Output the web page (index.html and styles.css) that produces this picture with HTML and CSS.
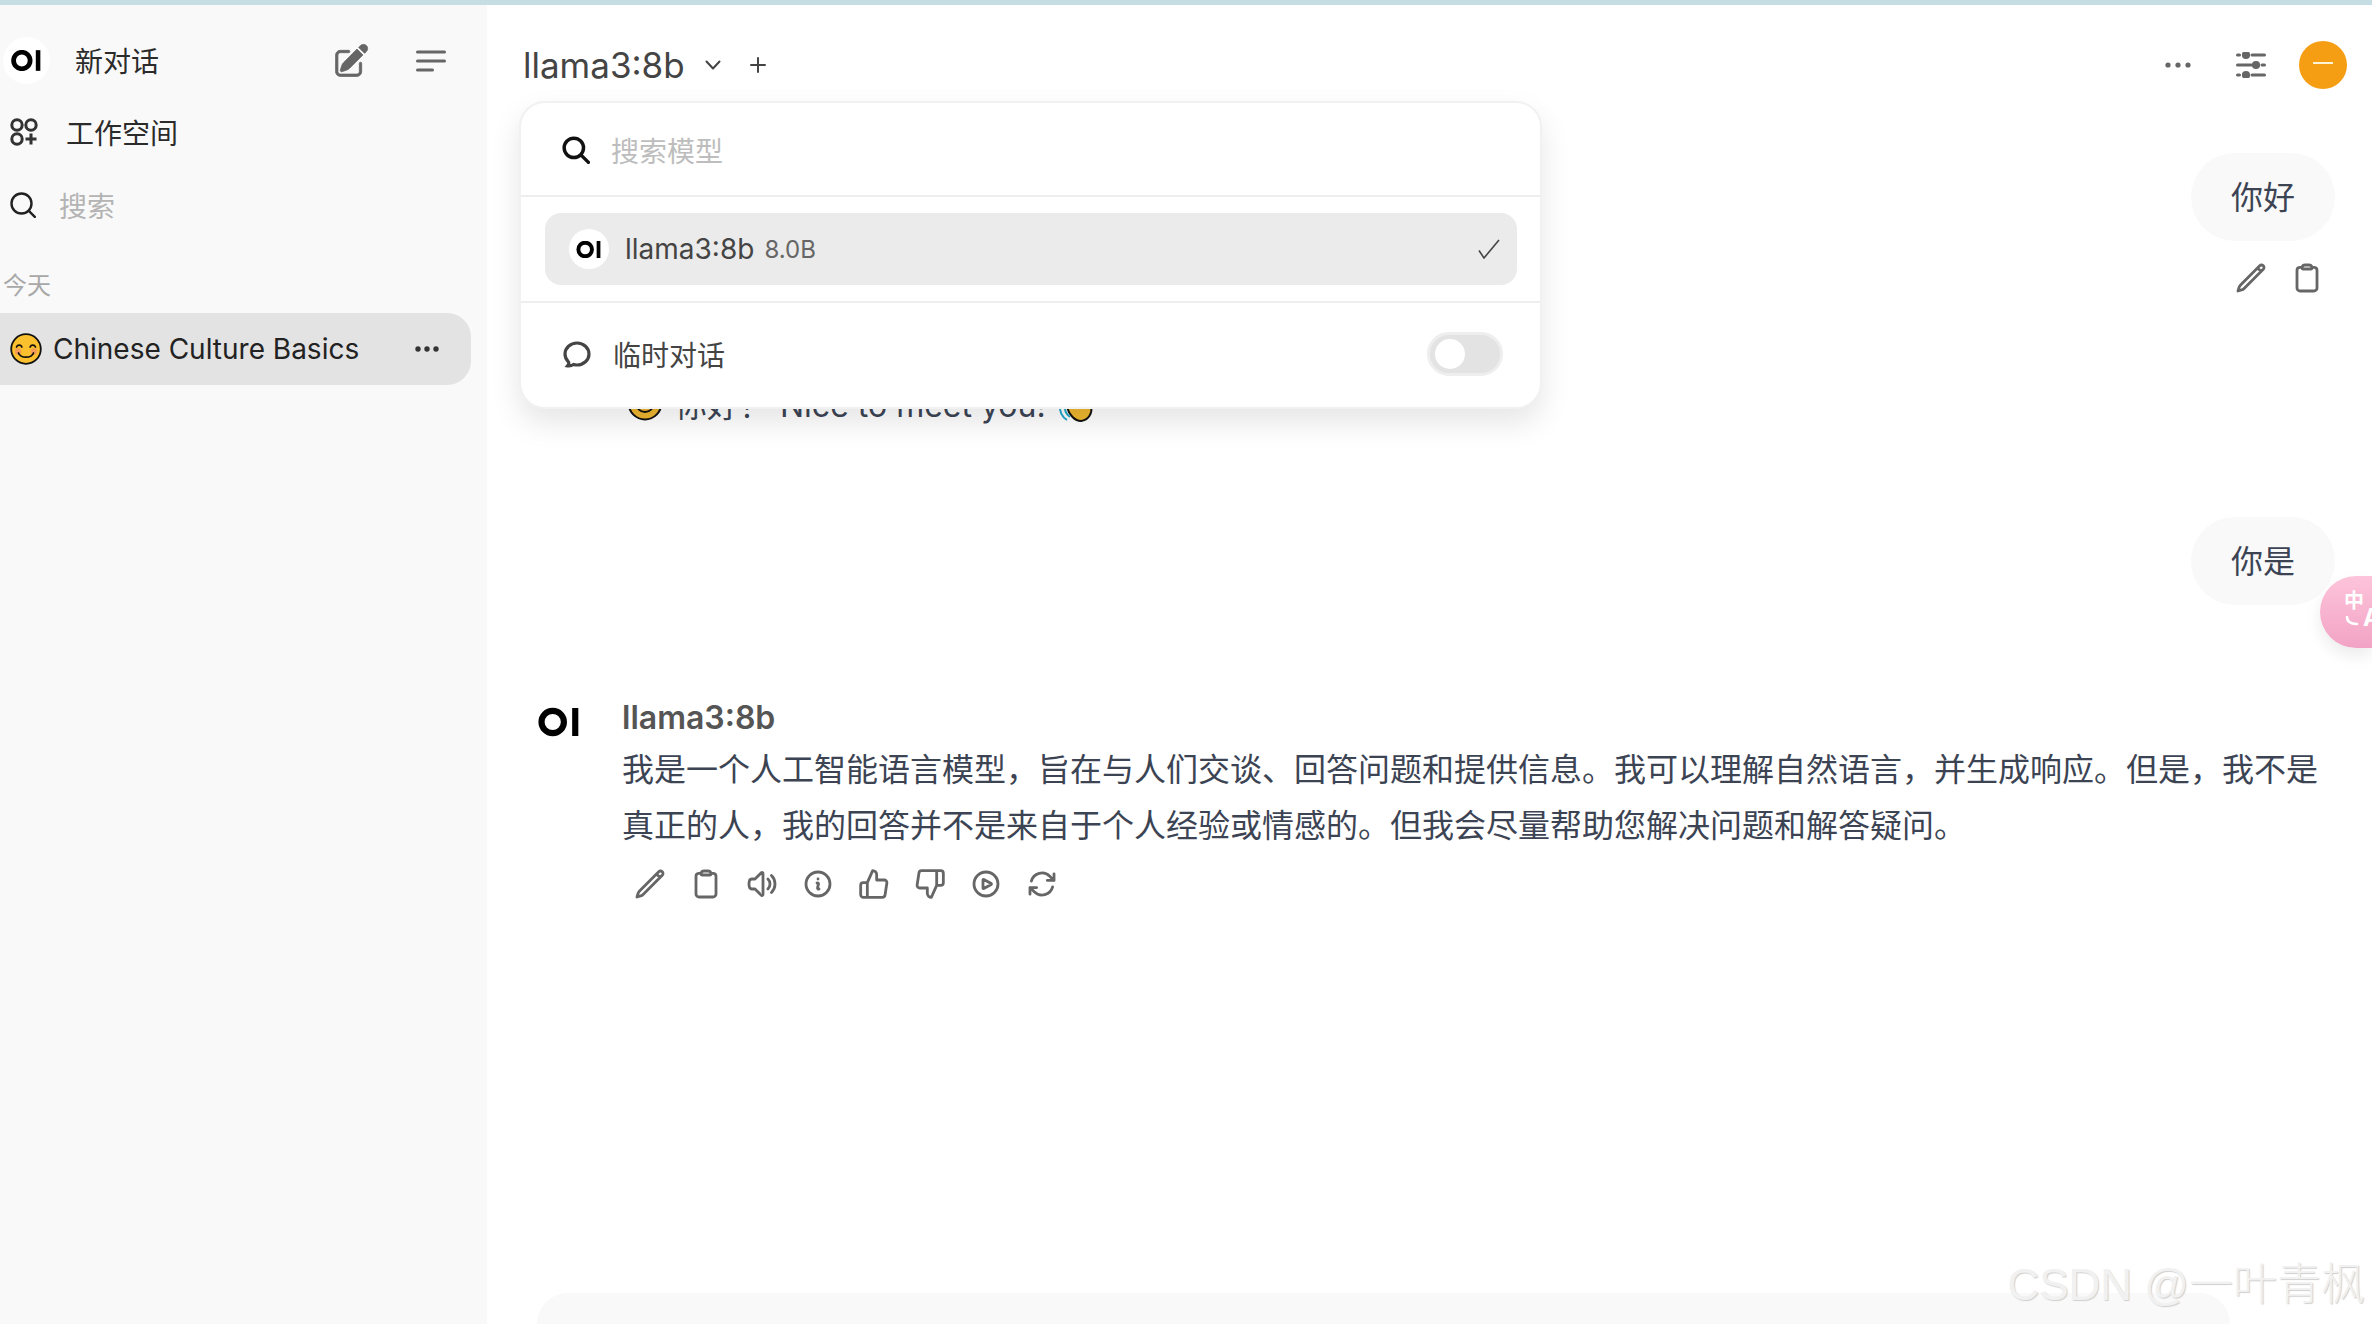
FILE: index.html
```html
<!DOCTYPE html>
<html lang="zh-CN">
<head>
    <meta charset="UTF-8">
    <meta name="viewport" content="width=device-width, initial-scale=1.0">
    <title>Chinese Culture Basics</title>
    <link rel="stylesheet" href="styles.css">
</head>
<body>
    <div class="top-strip"></div>
    <div class="app">
        <aside class="sidebar">
            <div class="new-chat">
                <span class="logo-badge">
                    <svg class="oi-logo" viewBox="0 0 30 20"><circle cx="10.5" cy="10" r="8" fill="none" stroke="#000" stroke-width="4.6"/><rect x="24" y="0" width="4.4" height="20" fill="#000"/></svg>
                </span>
                <span class="new-chat-label">新对话</span>
                <svg class="icon-compose" viewBox="0 0 24 24" fill="#666" stroke="#666" stroke-width=".5"><path d="M21.731 2.269a2.625 2.625 0 0 0-3.712 0l-1.157 1.157 3.712 3.712 1.157-1.157a2.625 2.625 0 0 0 0-3.712ZM19.513 8.199l-3.712-3.712-8.4 8.4a5.25 5.25 0 0 0-1.32 2.214l-.8 2.685a.75.75 0 0 0 .933.933l2.685-.8a5.25 5.25 0 0 0 2.214-1.32l8.4-8.4Z"/><path d="M5.25 5.25a3 3 0 0 0-3 3v10.5a3 3 0 0 0 3 3h10.5a3 3 0 0 0 3-3V13.5a.75.75 0 0 0-1.5 0v5.25a1.5 1.5 0 0 1-1.5 1.5H5.25a1.5 1.5 0 0 1-1.5-1.5V8.25a1.5 1.5 0 0 1 1.5-1.5h5.25a.75.75 0 0 0 0-1.5H5.25Z"/></svg>
                <svg class="icon-menu" viewBox="0 0 30 24" fill="none" stroke="#666" stroke-width="3" stroke-linecap="round"><path d="M1.5 3h27M1.5 12h27M1.5 21h15"/></svg>
            </div>

            <div class="side-link">
                <svg class="icon-workspace" viewBox="0 0 28 28" fill="none" stroke="#333" stroke-width="3"><circle cx="7" cy="7" r="5.2"/><circle cx="21" cy="7" r="5.2"/><circle cx="7" cy="21" r="5.2"/><path d="M21 15.5v11M15.5 21h11"/></svg>
                <span>工作空间</span>
            </div>

            <div class="side-search">
                <svg class="icon-side-search" viewBox="0 0 26 26" fill="none" stroke="#222" stroke-width="2.4" stroke-linecap="round"><circle cx="11.5" cy="11.5" r="10"/><path d="M18.8 18.8l6 6"/></svg>
                <span>搜索</span>
            </div>

            <div class="side-date">今天</div>

            <div class="chat-item">
                <svg class="emoji-smile" viewBox="0 0 32 32"><circle cx="16" cy="16" r="14.8" fill="#fbc02d" stroke="#111" stroke-width="1.8"/><circle cx="8" cy="18.5" r="3.2" fill="#f48a6a" opacity=".7"/><circle cx="24" cy="18.5" r="3.2" fill="#f48a6a" opacity=".7"/><path d="M6.5 14c1-2.6 4.4-2.6 5.4 0M20.1 14c1-2.6 4.4-2.6 5.4 0M8.5 20c2 5.6 13 5.6 15 0" fill="none" stroke="#111" stroke-width="1.7" stroke-linecap="round"/></svg>
                <span class="chat-title">Chinese Culture Basics</span>
                <svg class="icon-chat-more" viewBox="0 0 24 6" fill="#333"><circle cx="3" cy="3" r="2.7"/><circle cx="12" cy="3" r="2.7"/><circle cx="21" cy="3" r="2.7"/></svg>
            </div>
        </aside>

        <main class="main">
            <header class="chat-header">
                <span class="model-name">llama3:8b</span>
                <svg class="icon-chevron" viewBox="0 0 16 10" fill="none" stroke="#444" stroke-width="2" stroke-linecap="round" stroke-linejoin="round"><path d="M1.5 1.5L8 8.5l6.5-7"/></svg>
                <svg class="icon-plus" viewBox="0 0 16 16" fill="none" stroke="#444" stroke-width="2" stroke-linecap="round"><path d="M8 1v14M1 8h14"/></svg>
                <div class="header-right">
                    <svg class="icon-more" viewBox="0 0 26 6" fill="#666"><circle cx="3" cy="3" r="2.6"/><circle cx="13" cy="3" r="2.6"/><circle cx="23" cy="3" r="2.6"/></svg>
                    <svg class="icon-sliders" viewBox="0 0 30 26" fill="#666" stroke="#666" stroke-width="3" stroke-linecap="round"><path d="M1.5 3h2M16 3h12.5M1.5 13h14M26 13h2.5M1.5 23h2M16 23h12.5" fill="none"/><circle cx="10" cy="3" r="2.6"/><circle cx="20" cy="13" r="2.6"/><circle cx="10" cy="23" r="2.6"/></svg>
                    <span class="avatar"><span class="avatar-dash"></span></span>
                </div>
            </header>

            <div class="messages">
                <div class="user-msg">
                    <div class="bubble">你好</div>
                    <div class="user-actions">
                        <svg class="action-icon" viewBox="0 0 24 24"><path d="m16.862 4.487 1.687-1.688a1.875 1.875 0 1 1 2.652 2.652L6.832 19.82a4.5 4.5 0 0 1-1.897 1.13l-2.685.8.8-2.685a4.5 4.5 0 0 1 1.13-1.897L16.863 4.487Zm0 0L19.5 7.125"/></svg>
                        <svg class="action-icon" viewBox="0 0 24 24"><path d="M15.666 3.888A2.25 2.25 0 0 0 13.5 2.25h-3c-1.03 0-1.9.693-2.166 1.638m7.332 0c.055.194.084.4.084.612v0a.75.75 0 0 1-.75.75H9a.75.75 0 0 1-.75-.75v0c0-.212.03-.418.084-.612m7.332 0c.646.049 1.288.11 1.927.184 1.1.128 1.907 1.077 1.907 2.185V19.5a2.25 2.25 0 0 1-2.25 2.25H6.75A2.25 2.25 0 0 1 4.5 19.5V6.257c0-1.108.806-2.057 1.907-2.185a48.208 48.208 0 0 1 1.927-.184"/></svg>
                    </div>
                </div>

                <div class="hidden-reply">
                    <svg class="emoji-reply" viewBox="0 0 36 36"><circle cx="18" cy="18" r="16.4" fill="#eeb730" stroke="#111" stroke-width="2"/><circle cx="18" cy="18" r="9" fill="none" stroke="#111" stroke-width="1.8"/></svg>
                    <span>你好！ Nice to meet you!</span>
                    <svg class="emoji-wave" viewBox="0 0 36 36"><path d="M9 6c8-3 21 1 24 12 2 9-3 15-10 16-6 0-12-6-14-14Z" fill="#eeb730" stroke="#111" stroke-width="2"/><path d="M7 18c-1 5 1 9 5 12M2 18c-1 6 2 12 7 15" fill="none" stroke="#1fa5c8" stroke-width="2"/></svg>
                </div>

                <div class="user-msg user-msg-second">
                    <div class="bubble">你是</div>
                </div>

                <div class="assistant-msg">
                    <svg class="assistant-logo" viewBox="0 0 30 20"><circle cx="10.5" cy="10" r="8" fill="none" stroke="#000" stroke-width="4.4"/><rect x="24.4" y="0" width="4.4" height="20" fill="#000"/></svg>
                    <div class="assistant-body">
                        <div class="assistant-name">llama3:8b</div>
                        <p class="assistant-text">我是一个人工智能语言模型，旨在与人们交谈、回答问题和提供信息。我可以理解自然语言，并生成响应。但是，我不是真正的人，我的回答并不是来自于个人经验或情感的。但我会尽量帮助您解决问题和解答疑问。</p>
                        <div class="assistant-actions">
                            <svg class="action-icon" viewBox="0 0 24 24"><path d="m16.862 4.487 1.687-1.688a1.875 1.875 0 1 1 2.652 2.652L6.832 19.82a4.5 4.5 0 0 1-1.897 1.13l-2.685.8.8-2.685a4.5 4.5 0 0 1 1.13-1.897L16.863 4.487Zm0 0L19.5 7.125"/></svg>
                            <svg class="action-icon" viewBox="0 0 24 24"><path d="M15.666 3.888A2.25 2.25 0 0 0 13.5 2.25h-3c-1.03 0-1.9.693-2.166 1.638m7.332 0c.055.194.084.4.084.612v0a.75.75 0 0 1-.75.75H9a.75.75 0 0 1-.75-.75v0c0-.212.03-.418.084-.612m7.332 0c.646.049 1.288.11 1.927.184 1.1.128 1.907 1.077 1.907 2.185V19.5a2.25 2.25 0 0 1-2.25 2.25H6.75A2.25 2.25 0 0 1 4.5 19.5V6.257c0-1.108.806-2.057 1.907-2.185a48.208 48.208 0 0 1 1.927-.184"/></svg>
                            <svg class="action-icon" viewBox="0 0 24 24"><path d="M19.114 5.636a9 9 0 0 1 0 12.728M16.463 8.288a5.25 5.25 0 0 1 0 7.424M6.75 8.25l4.72-4.72a.75.75 0 0 1 1.28.53v15.88a.75.75 0 0 1-1.28.53l-4.72-4.72H4.51c-.88 0-1.704-.507-1.938-1.354A9.009 9.009 0 0 1 2.25 12c0-.83.112-1.633.322-2.396C2.806 8.756 3.63 8.25 4.51 8.25H6.75Z"/></svg>
                            <svg class="action-icon" viewBox="0 0 24 24"><path d="m11.25 11.25.041-.02a.75.75 0 0 1 1.063.852l-.708 2.836a.75.75 0 0 0 1.063.853l.041-.021M21 12a9 9 0 1 1-18 0 9 9 0 0 1 18 0Zm-9-3.75h.008v.008H12V8.25Z"/></svg>
                            <svg class="action-icon" viewBox="0 0 24 24"><path d="M14 9V5a3 3 0 0 0-3-3l-4 9v11h11.28a2 2 0 0 0 2-1.7l1.38-9a2 2 0 0 0-2-2.3zM7 22H4a2 2 0 0 1-2-2v-7a2 2 0 0 1 2-2h3"/></svg>
                            <svg class="action-icon" viewBox="0 0 24 24"><path d="M10 15v4a3 3 0 0 0 3 3l4-9V2H5.72a2 2 0 0 0-2 1.7l-1.38 9a2 2 0 0 0 2 2.3zm7-13h3a2 2 0 0 1 2 2v7a2 2 0 0 1-2 2h-3"/></svg>
                            <svg class="action-icon" viewBox="0 0 24 24"><path d="M21 12a9 9 0 1 1-18 0 9 9 0 0 1 18 0Z"/><path d="M15.91 11.672a.375.375 0 0 1 0 .656l-5.603 3.113a.375.375 0 0 1-.557-.328V8.887c0-.286.307-.466.557-.327l5.603 3.112Z"/></svg>
                            <svg class="action-icon" viewBox="0 0 24 24"><path d="M16.023 9.348h4.992v-.001M2.985 19.644v-4.992m0 0h4.992m-4.993 0 3.181 3.183a8.25 8.25 0 0 0 13.803-3.7M4.031 9.865a8.25 8.25 0 0 1 13.803-3.7l3.181 3.182m0-4.991v4.99"/></svg>
                        </div>
                    </div>
                </div>
            </div>

            <div class="input-box"></div>

            <!-- model selector dropdown -->
            <div class="model-menu">
                <div class="menu-search">
                    <svg class="icon-menu-search" viewBox="0 0 26 26" fill="none" stroke="#111" stroke-width="3.2" stroke-linecap="round"><circle cx="11" cy="11" r="9"/><path d="M18 18l6.5 6.5"/></svg>
                    <span>搜索模型</span>
                </div>
                <div class="menu-list">
                    <div class="menu-item">
                        <span class="logo-badge logo-badge-small">
                            <svg class="oi-logo-small" viewBox="0 0 30 20"><circle cx="10.5" cy="10" r="8" fill="none" stroke="#000" stroke-width="4.6"/><rect x="24" y="0" width="4.4" height="20" fill="#000"/></svg>
                        </span>
                        <span class="menu-item-name">llama3:8b</span>
                        <span class="menu-item-size">8.0B</span>
                        <svg class="icon-check" viewBox="0 0 22 20" fill="none" stroke="#444" stroke-width="1.6"><path d="M1 11.5l5 7.5L21 1"/></svg>
                    </div>
                </div>
                <div class="menu-temp">
                    <svg class="icon-bubble" viewBox="0 0 24 24" fill="none" stroke="#444" stroke-width="2.4"><path d="M12 20.25c4.97 0 9-3.694 9-8.25s-4.03-8.25-9-8.25S3 7.444 3 12c0 2.104.859 4.023 2.273 5.48.432.447.74 1.04.586 1.641a4.483 4.483 0 0 1-.923 1.785A5.969 5.969 0 0 0 6 21c1.282 0 2.47-.402 3.445-1.087.81.22 1.668.337 2.555.337Z"/></svg>
                    <span>临时对话</span>
                    <span class="toggle"><span class="toggle-knob"></span></span>
                </div>
            </div>

            <!-- translate extension button -->
            <div class="translate-btn">
                <span class="translate-zh">中</span>
                <span class="translate-en">A</span>
                <svg class="translate-arc" viewBox="0 0 14 10" fill="none" stroke="#fff" stroke-width="2.6" stroke-linecap="round"><path d="M2 1c0 5 3 7 10 7"/></svg>
            </div>
        </main>
    </div>
    <div class="watermark">CSDN @一叶青枫</div>
</body>
</html>
```

FILE: styles.css
```css
:root {
    --strip-color: #c6dee3;
    --sidebar-bg: #f9f9f9;
    --active-bg: #e3e3e3;
    --text-dark: #2b2b2b;
    --text-body: #3c4454;
    --text-muted: #b4b4b4;
    --line-color: #eeeeee;
    --font-stack: Inter, "Noto Sans CJK SC", "Noto Sans", sans-serif;
}

* {
    margin: 0;
    padding: 0;
    box-sizing: border-box;
    font-family: var(--font-stack);
}

html, body {
    height: 100%;
}

body {
    display: flex;
    flex-direction: column;
    overflow: hidden;
    background-color: #ffffff;
    position: relative;
}

svg {
    display: block;
    flex-shrink: 0;
}

.top-strip {
    height: 5px;
    background-color: var(--strip-color);
    flex-shrink: 0;
}

.app {
    flex: 1;
    display: flex;
    min-height: 0;
}

/* Sidebar */
.sidebar {
    width: 487px;
    flex-shrink: 0;
    background-color: var(--sidebar-bg);
    display: flex;
    flex-direction: column;
    padding-top: 32px;
    color: var(--text-dark);
}

.new-chat {
    display: flex;
    align-items: center;
    height: 47px;
    padding-left: 3px;
    font-size: 28px;
}

.logo-badge {
    width: 47px;
    height: 47px;
    border-radius: 50%;
    background-color: #ffffff;
    display: flex;
    align-items: center;
    justify-content: center;
    flex-shrink: 0;
}

.oi-logo {
    width: 31px;
    height: 21px;
}

.new-chat-label {
    margin-left: 25px;
    margin-top: -2px;
    width: 257px;
}

.icon-compose {
    width: 38px;
    height: 38px;
}

.icon-menu {
    width: 30px;
    height: 24px;
    margin-left: 46px;
}

.side-link {
    display: flex;
    align-items: center;
    height: 48px;
    margin-top: 24px;
    padding-left: 10px;
    font-size: 28px;
}

.icon-workspace {
    width: 28px;
    height: 28px;
    margin-right: 28px;
}

.side-search {
    display: flex;
    align-items: center;
    height: 48px;
    margin-top: 25px;
    padding-left: 10px;
    font-size: 28px;
    color: var(--text-muted);
}

.icon-side-search {
    width: 26px;
    height: 26px;
    margin-right: 23px;
}

.side-date {
    margin-top: 40px;
    padding-left: 3px;
    height: 34px;
    line-height: 34px;
    font-size: 24px;
    color: #a8a8a8;
}

.chat-item {
    display: flex;
    align-items: center;
    height: 72px;
    margin-top: 10px;
    margin-right: 16px;
    padding-left: 10px;
    background-color: var(--active-bg);
    border-radius: 0 24px 24px 0;
    font-size: 28px;
    color: #222222;
}

.emoji-smile {
    width: 32px;
    height: 32px;
    margin-right: 11px;
}

.chat-title {
    width: 362px;
    white-space: nowrap;
}

.icon-chat-more {
    width: 24px;
    height: 6px;
}

/* Main area */
.main {
    flex: 1;
    min-width: 0;
    position: relative;
    display: flex;
    flex-direction: column;
    overflow: hidden;
}

.chat-header {
    display: flex;
    align-items: center;
    height: 120px;
    padding: 0 25px 0 36px;
    color: #444444;
    flex-shrink: 0;
}

.model-name {
    font-size: 35px;
    line-height: 120px;
}

.icon-chevron {
    width: 16px;
    height: 10px;
    margin-left: 20px;
}

.icon-plus {
    width: 16px;
    height: 16px;
    margin-left: 29px;
}

.header-right {
    margin-left: auto;
    display: flex;
    align-items: center;
}

.icon-more {
    width: 26px;
    height: 6px;
}

.icon-sliders {
    width: 30px;
    height: 26px;
    margin-left: 45px;
}

.avatar {
    width: 48px;
    height: 48px;
    margin-left: 33px;
    border-radius: 50%;
    background-color: #f59e14;
    display: flex;
    align-items: center;
    justify-content: center;
}

.avatar-dash {
    width: 20px;
    height: 2px;
    margin-top: -4px;
    background-color: #fff3d6;
}

.messages {
    flex: 1;
    min-height: 0;
    padding: 28px 37px 0 51px;
    display: flex;
    flex-direction: column;
}

.user-msg {
    display: flex;
    flex-direction: column;
    align-items: flex-end;
}

.user-msg-second {
    margin-top: 87px;
}

.bubble {
    width: 144px;
    height: 88px;
    border-radius: 44px;
    background-color: #f9f9f9;
    font-size: 32px;
    line-height: 90px;
    text-align: center;
    color: var(--text-body);
}

.user-actions {
    display: flex;
    gap: 24px;
    margin-top: 21px;
    margin-right: 12px;
}

.action-icon {
    width: 32px;
    height: 32px;
    fill: none;
    stroke: #666666;
    stroke-width: 2.1;
    stroke-linecap: round;
    stroke-linejoin: round;
}

.hidden-reply {
    display: flex;
    align-items: center;
    height: 55px;
    margin-top: 81px;
    padding-left: 89px;
    font-size: 32px;
    color: var(--text-body);
}

.emoji-reply {
    width: 36px;
    height: 36px;
    margin-right: 12px;
}

.emoji-wave {
    width: 36px;
    height: 36px;
    margin-left: 12px;
    margin-top: 4px;
}

.assistant-msg {
    display: flex;
    margin-top: 90px;
}

.assistant-logo {
    width: 42px;
    height: 30px;
    margin-top: 12px;
}

.assistant-body {
    margin-left: 42px;
    flex: 1;
    min-width: 0;
}

.assistant-name {
    height: 47px;
    line-height: 46px;
    font-size: 32px;
    font-weight: 600;
    color: #555555;
}

.assistant-text {
    font-size: 32px;
    line-height: 55.5px;
    color: var(--text-body);
}

.assistant-actions {
    display: flex;
    gap: 24px;
    margin-top: 15px;
    padding-left: 12px;
}

.input-box {
    height: 31px;
    flex-shrink: 0;
    margin: 0 142px 0 50px;
    background-color: #f9f9f9;
    border-radius: 44px 44px 0 0;
}

/* Model dropdown */
.model-menu {
    position: absolute;
    top: 96px;
    left: 32px;
    width: 1023px;
    height: 308px;
    background-color: #ffffff;
    border: 2px solid #f1f1f1;
    border-radius: 26px;
    box-shadow: 0 14px 30px rgba(0, 0, 0, 0.1);
    display: flex;
    flex-direction: column;
}

.menu-search {
    display: flex;
    align-items: center;
    height: 94px;
    padding: 2px 0 0 41px;
    font-size: 28px;
    color: #bdbdbd;
    border-bottom: 2px solid var(--line-color);
    flex-shrink: 0;
}

.icon-menu-search {
    width: 28px;
    height: 28px;
    margin-right: 21px;
}

.menu-list {
    height: 106px;
    padding: 16px 23px 0 24px;
    border-bottom: 2px solid var(--line-color);
    flex-shrink: 0;
}

.menu-item {
    display: flex;
    align-items: center;
    height: 72px;
    padding: 0 17px 0 24px;
    border-radius: 16px;
    background-color: #ebebeb;
    color: #444444;
}

.logo-badge-small {
    width: 40px;
    height: 40px;
}

.oi-logo-small {
    width: 26px;
    height: 17px;
}

.menu-item-name {
    margin-left: 16px;
    font-size: 28px;
}

.menu-item-size {
    margin-left: 10px;
    font-size: 24px;
    color: #666666;
}

.icon-check {
    width: 22px;
    height: 20px;
    margin-left: auto;
}

.menu-temp {
    flex: 1;
    display: flex;
    align-items: center;
    padding: 0 37px 2px 40px;
    font-size: 28px;
    color: #444444;
}

.icon-bubble {
    width: 32px;
    height: 32px;
    margin-right: 20px;
}

.toggle {
    margin-left: auto;
    width: 76px;
    height: 44px;
    border-radius: 22px;
    background-color: #e3e3e3;
    border: 3px solid #eeeeee;
    display: flex;
    align-items: center;
    padding-left: 5px;
}

.toggle-knob {
    width: 30px;
    height: 30px;
    border-radius: 50%;
    background-color: #ffffff;
}

/* Floating translate button */
.translate-btn {
    position: absolute;
    top: 571px;
    right: 0;
    width: 52px;
    height: 72px;
    border-radius: 36px 0 0 36px;
    background: linear-gradient(180deg, #fdc4da, #f2a3c5);
    box-shadow: 0 8px 16px rgba(0, 0, 0, 0.08);
    overflow: hidden;
    color: #ffffff;
    font-weight: 700;
}

.translate-zh {
    position: absolute;
    left: 24px;
    top: 12px;
    font-size: 20px;
    line-height: 26px;
}

.translate-en {
    position: absolute;
    left: 43px;
    top: 29px;
    font-size: 24px;
    line-height: 26px;
}

.translate-arc {
    position: absolute;
    left: 25px;
    top: 40px;
    width: 14px;
    height: 10px;
}

.watermark {
    position: absolute;
    right: 7px;
    bottom: 9px;
    font-family: "Liberation Sans", "Noto Sans CJK SC", sans-serif;
    font-size: 44px;
    font-weight: 300;
    line-height: 60px;
    white-space: nowrap;
    color: #f1f1f1;
    text-shadow: 1px 1px 1px #cfcfcf;
}
```
